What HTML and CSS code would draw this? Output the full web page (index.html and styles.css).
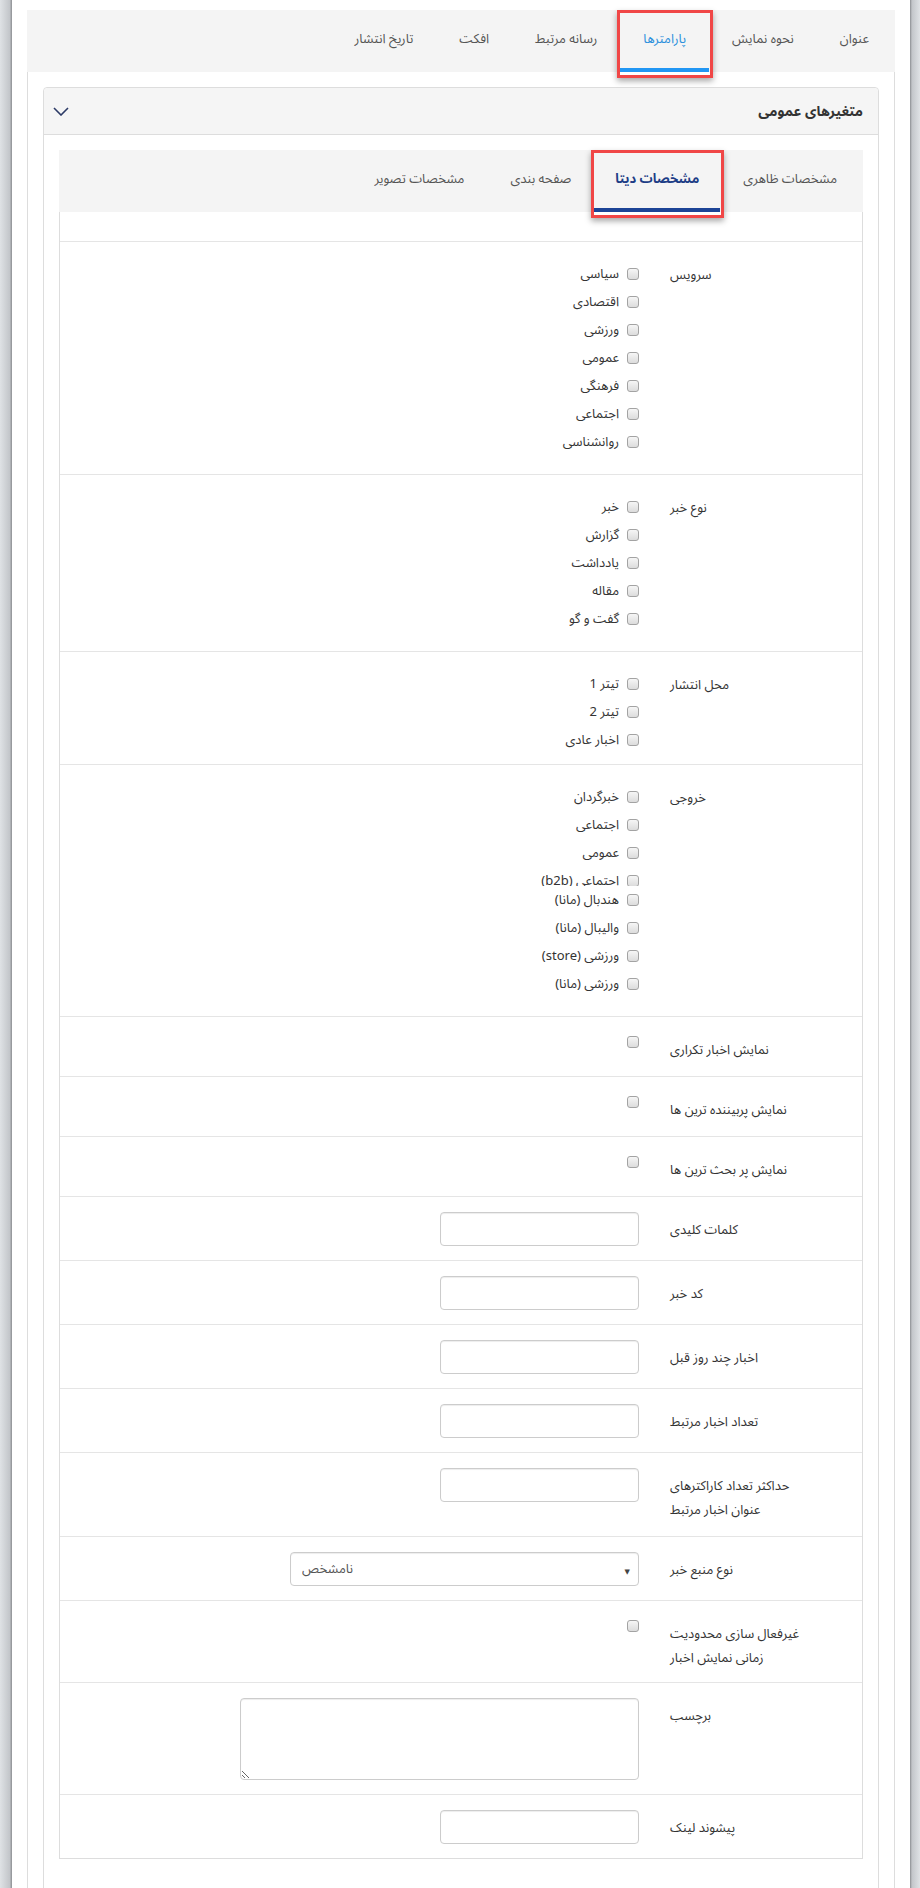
FILE: index.html
```html
<!DOCTYPE html>
<html lang="fa" dir="rtl">
<head>
    <meta charset="UTF-8">
    <meta name="viewport" content="width=device-width, initial-scale=1.0">
    <title>پارامترها</title>
    <link rel="stylesheet" href="styles.css">
</head>
<body>
    <div class="edge edge-right"></div>

    <div class="page">
        <nav class="tabs main-tabs">
            <a class="tab" href="#">عنوان</a>
            <a class="tab" href="#">نحوه نمایش</a>
            <a class="tab active marked" href="#">پارامترها</a>
            <a class="tab" href="#">رسانه مرتبط</a>
            <a class="tab" href="#">افکت</a>
            <a class="tab" href="#">تاریخ انتشار</a>
        </nav>

        <div class="tab-pane">
            <section class="panel">
                <header class="panel-head">
                    <h3>متغیرهای عمومی</h3>
                    <svg class="chevron" width="16" height="9" viewBox="0 0 16 9">
                        <path d="M1 1 L8 8 L15 1" fill="none" stroke="#2c3a66" stroke-width="1.6"/>
                    </svg>
                </header>

                <div class="panel-body">
                    <nav class="tabs sub-tabs">
                        <a class="tab" href="#">مشخصات ظاهری</a>
                        <a class="tab active marked" href="#">مشخصات دیتا</a>
                        <a class="tab" href="#">صفحه بندی</a>
                        <a class="tab" href="#">مشخصات تصویر</a>
                    </nav>

                    <div class="sub-pane">
                        <div class="spacer"></div>

                        <div class="row">
                            <div class="row-label">سرویس</div>
                            <div class="row-field">
                                <div class="checks">
                                    <label class="check"><input type="checkbox"><span>سیاسی</span></label>
                                    <label class="check"><input type="checkbox"><span>اقتصادی</span></label>
                                    <label class="check"><input type="checkbox"><span>ورزشی</span></label>
                                    <label class="check"><input type="checkbox"><span>عمومی</span></label>
                                    <label class="check"><input type="checkbox"><span>فرهنگی</span></label>
                                    <label class="check"><input type="checkbox"><span>اجتماعی</span></label>
                                    <label class="check"><input type="checkbox"><span>روانشناسی</span></label>
                                </div>
                            </div>
                        </div>

                        <div class="row">
                            <div class="row-label">نوع خبر</div>
                            <div class="row-field">
                                <div class="checks">
                                    <label class="check"><input type="checkbox"><span>خبر</span></label>
                                    <label class="check"><input type="checkbox"><span>گزارش</span></label>
                                    <label class="check"><input type="checkbox"><span>یادداشت</span></label>
                                    <label class="check"><input type="checkbox"><span>مقاله</span></label>
                                    <label class="check"><input type="checkbox"><span>گفت و گو</span></label>
                                </div>
                            </div>
                        </div>

                        <div class="row short">
                            <div class="row-label">محل انتشار</div>
                            <div class="row-field">
                                <div class="checks">
                                    <label class="check"><input type="checkbox"><span>تیتر 1</span></label>
                                    <label class="check"><input type="checkbox"><span>تیتر 2</span></label>
                                    <label class="check"><input type="checkbox"><span>اخبار عادی</span></label>
                                </div>
                            </div>
                        </div>

                        <div class="row">
                            <div class="row-label">خروجی</div>
                            <div class="row-field">
                                <div class="checks">
                                    <label class="check"><input type="checkbox"><span>خبرگردان</span></label>
                                    <label class="check"><input type="checkbox"><span>اجتماعی</span></label>
                                    <label class="check"><input type="checkbox"><span>عمومی</span></label>
                                    <label class="check cut"><input type="checkbox"><span>اجتماعی (b2b)</span></label>
                                    <label class="check"><input type="checkbox"><span>هندبال (مانا)</span></label>
                                    <label class="check"><input type="checkbox"><span>والیبال (مانا)</span></label>
                                    <label class="check"><input type="checkbox"><span>ورزشی (store)</span></label>
                                    <label class="check"><input type="checkbox"><span>ورزشی (مانا)</span></label>
                                </div>
                            </div>
                        </div>

                        <div class="row">
                            <div class="row-label">نمایش اخبار تکراری</div>
                            <div class="row-field"><input class="single" type="checkbox"></div>
                        </div>

                        <div class="row">
                            <div class="row-label">نمایش پربیننده ترین ها</div>
                            <div class="row-field"><input class="single" type="checkbox"></div>
                        </div>

                        <div class="row">
                            <div class="row-label">نمایش پر بحث ترین ها</div>
                            <div class="row-field"><input class="single" type="checkbox"></div>
                        </div>

                        <div class="row">
                            <div class="row-label">کلمات کلیدی</div>
                            <div class="row-field"><input class="text-input" type="text"></div>
                        </div>

                        <div class="row">
                            <div class="row-label">کد خبر</div>
                            <div class="row-field"><input class="text-input" type="text"></div>
                        </div>

                        <div class="row">
                            <div class="row-label">اخبار چند روز قبل</div>
                            <div class="row-field"><input class="text-input" type="text"></div>
                        </div>

                        <div class="row">
                            <div class="row-label">تعداد اخبار مرتبط</div>
                            <div class="row-field"><input class="text-input" type="text"></div>
                        </div>

                        <div class="row">
                            <div class="row-label">حداکثر تعداد کاراکترهای عنوان اخبار مرتبط</div>
                            <div class="row-field"><input class="text-input" type="text"></div>
                        </div>

                        <div class="row">
                            <div class="row-label">نوع منبع خبر</div>
                            <div class="row-field">
                                <div class="select-wrap">
                                    <select class="select" dir="ltr">
                                        <option>نامشخص</option>
                                    </select>
                                    <span class="select-arrow">▼</span>
                                </div>
                            </div>
                        </div>

                        <div class="row tight">
                            <div class="row-label">غیرفعال سازی محدودیت زمانی نمایش اخبار</div>
                            <div class="row-field"><input class="single" type="checkbox"></div>
                        </div>

                        <div class="row">
                            <div class="row-label">برچسب</div>
                            <div class="row-field"><textarea class="textarea"></textarea></div>
                        </div>

                        <div class="row">
                            <div class="row-label">پیشوند لینک</div>
                            <div class="row-field"><input class="text-input" type="text"></div>
                        </div>
                    </div>
                </div>
            </section>
        </div>
    </div>

    <div class="edge edge-left"></div>
</body>
</html>
```

FILE: styles.css
```css
* {
    box-sizing: border-box;
}
html, body {
    margin: 0;
}
body {
    display: flex;
    min-height: 1888px;
    font-family: "Noto Sans Arabic", "Noto Naskh Arabic", Tahoma, "DejaVu Sans", sans-serif;
    font-size: 13px;
    color: #333;
    background: #fff;
}

/* window frame */
.edge {
    flex: none;
}
.edge-right {
    width: 10px;
    background: linear-gradient(to right, #8c8e92, #c3c6ca 20%, #dfe2e5);
}
.edge-left {
    width: 12px;
    background: linear-gradient(to right, #dfe2e5, #c3c6ca 80%, #8c8e92);
}
.page {
    flex: 1;
    padding: 10px 15px 0;
}

/* tabs */
.tabs {
    display: flex;
    height: 62px;
    padding-right: 3px;
    background: #f4f4f4;
}
.tab {
    position: relative;
    display: flex;
    align-items: center;
    padding: 0 23px;
    border-bottom: 4px solid transparent;
    color: #555;
    text-decoration: none;
}
.main-tabs .tab.active {
    color: #2b8fdc;
    border-bottom-color: #2196f3;
}
.sub-tabs .tab.active {
    padding: 0 21px;
    color: #1d3d86;
    font-weight: bold;
    border-bottom-color: #1c4496;
}
.tab.marked::after {
    content: "";
    position: absolute;
    top: 0;
    bottom: -10px;
    left: -3px;
    right: -4px;
    border: 3px solid #f04646;
    box-shadow: 0 3px 6px rgba(0, 0, 0, 0.35);
}

.tab-pane {
    min-height: 1816px;
    padding: 15px;
    border: 1px solid #ddd;
    border-top: 0;
}

/* panel */
.panel {
    border: 1px solid #ddd;
    border-radius: 4px;
}
.panel-head {
    display: flex;
    align-items: center;
    justify-content: space-between;
    height: 47px;
    padding: 0 15px 0 9px;
    background: #f5f5f5;
    border-bottom: 1px solid #ddd;
    border-radius: 4px 4px 0 0;
}
.panel-head h3 {
    margin: 0;
    font-size: 14px;
    font-weight: bold;
    color: #333;
}
.panel-body {
    padding: 15px 15px 60px;
}

.sub-pane {
    border: 1px solid #ddd;
    border-top: 0;
}
.spacer {
    height: 29px;
}

/* form rows */
.row {
    display: grid;
    grid-template-columns: 192px 1fr;
    padding: 15px 0 14px;
    border-top: 1px solid #e5e5e5;
}
.row.short {
    padding-bottom: 6px;
}
.row.tight {
    padding-bottom: 12px;
}
.row-label {
    padding: 6px 52px 0 0;
    line-height: 24px;
    text-align: left;
    color: #333;
}
.row-field {
    display: flex;
    flex-direction: column;
    align-items: flex-start;
    padding-right: 31px;
}

.checks {
    margin: 3px 0 4px;
}
.check {
    display: flex;
    align-items: center;
    gap: 8px;
    height: 28px;
    color: #333;
}
.check span {
    line-height: 28px;
}
.check.cut {
    height: 19px;
    overflow: hidden;
    align-items: flex-start;
}
.check.cut input {
    margin-top: 8px;
}

input[type="checkbox"] {
    appearance: none;
    -webkit-appearance: none;
    flex: none;
    width: 12px;
    height: 12px;
    margin: 0;
    border: 1px solid #a3a3a3;
    border-radius: 3px;
    background: linear-gradient(#f6f6f6, #dcdcdc);
}
input.single {
    margin-top: 4px;
}

.text-input,
.select,
.textarea {
    border: 1px solid #ccc;
    border-radius: 4px;
    background: #fff;
    box-shadow: inset 0 1px 1px rgba(0, 0, 0, 0.075);
    font-family: inherit;
    font-size: 13px;
    color: #555;
}
.text-input {
    width: 199px;
    height: 34px;
}
.select-wrap {
    position: relative;
    width: 349px;
    height: 34px;
}
.select {
    appearance: none;
    -webkit-appearance: none;
    width: 100%;
    height: 100%;
    padding: 0 11px;
}
.select-arrow {
    position: absolute;
    right: 9px;
    top: 12px;
    font-size: 7px;
    color: #444;
    pointer-events: none;
}
.textarea {
    display: block;
    width: 399px;
    height: 82px;
}
```
